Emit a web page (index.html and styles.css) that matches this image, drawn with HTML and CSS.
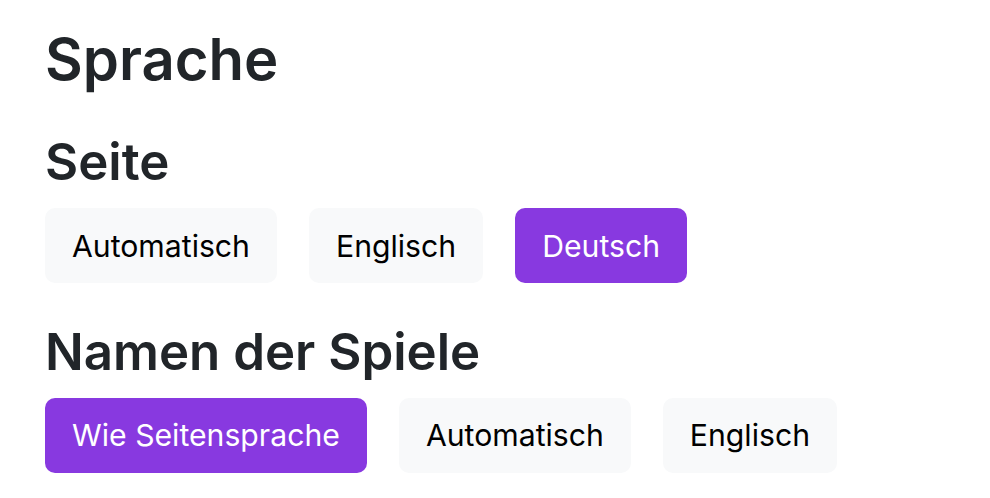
FILE: index.html
```html
<!DOCTYPE html>
<html lang="de">
<head>
<meta charset="utf-8">
<title>Sprache</title>
<link rel="stylesheet" href="styles.css">
</head>
<body>
<main class="settings">
  <h1 class="title">Sprache</h1>
  <section class="group">
    <h2 class="group-title">Seite</h2>
    <div class="options">
      <button class="opt">Automatisch</button>
      <button class="opt">Englisch</button>
      <button class="opt opt-active">Deutsch</button>
    </div>
  </section>
  <section class="group">
    <h2 class="group-title">Namen der Spiele</h2>
    <div class="options">
      <button class="opt opt-active">Wie Seitensprache</button>
      <button class="opt">Automatisch</button>
      <button class="opt">Englisch</button>
    </div>
  </section>
</main>
</body>
</html>
```
FILE: styles.css
```css
html, body {
  margin: 0;
  padding: 0;
  background: #ffffff;
}
body {
  font-family: Inter, "Noto Sans", "Liberation Sans", sans-serif;
  color: #212529;
}
.settings {
  display: flex;
  flex-direction: column;
  padding: 23px 45px;
}
.title {
  margin: 0;
  font-size: 58px;
  font-weight: 600;
  line-height: 72px;
}
.group {
  display: flex;
  flex-direction: column;
  gap: 16px;
  margin-top: 36px;
}
.group + .group {
  margin-top: 37.5px;
}
.group-title {
  margin: 0;
  font-size: 51px;
  font-weight: 600;
  line-height: 61px;
}
.options {
  display: flex;
  gap: 32px;
}
.opt {
  font-family: inherit;
  font-size: 30.2px;
  line-height: 42px;
  padding: 16.5px 27px;
  border: 0;
  border-radius: 10px;
  background: #f8f9fa;
  color: #000000;
  cursor: pointer;
}
.opt-active {
  background: #8839e0;
  color: #ffffff;
}
```
